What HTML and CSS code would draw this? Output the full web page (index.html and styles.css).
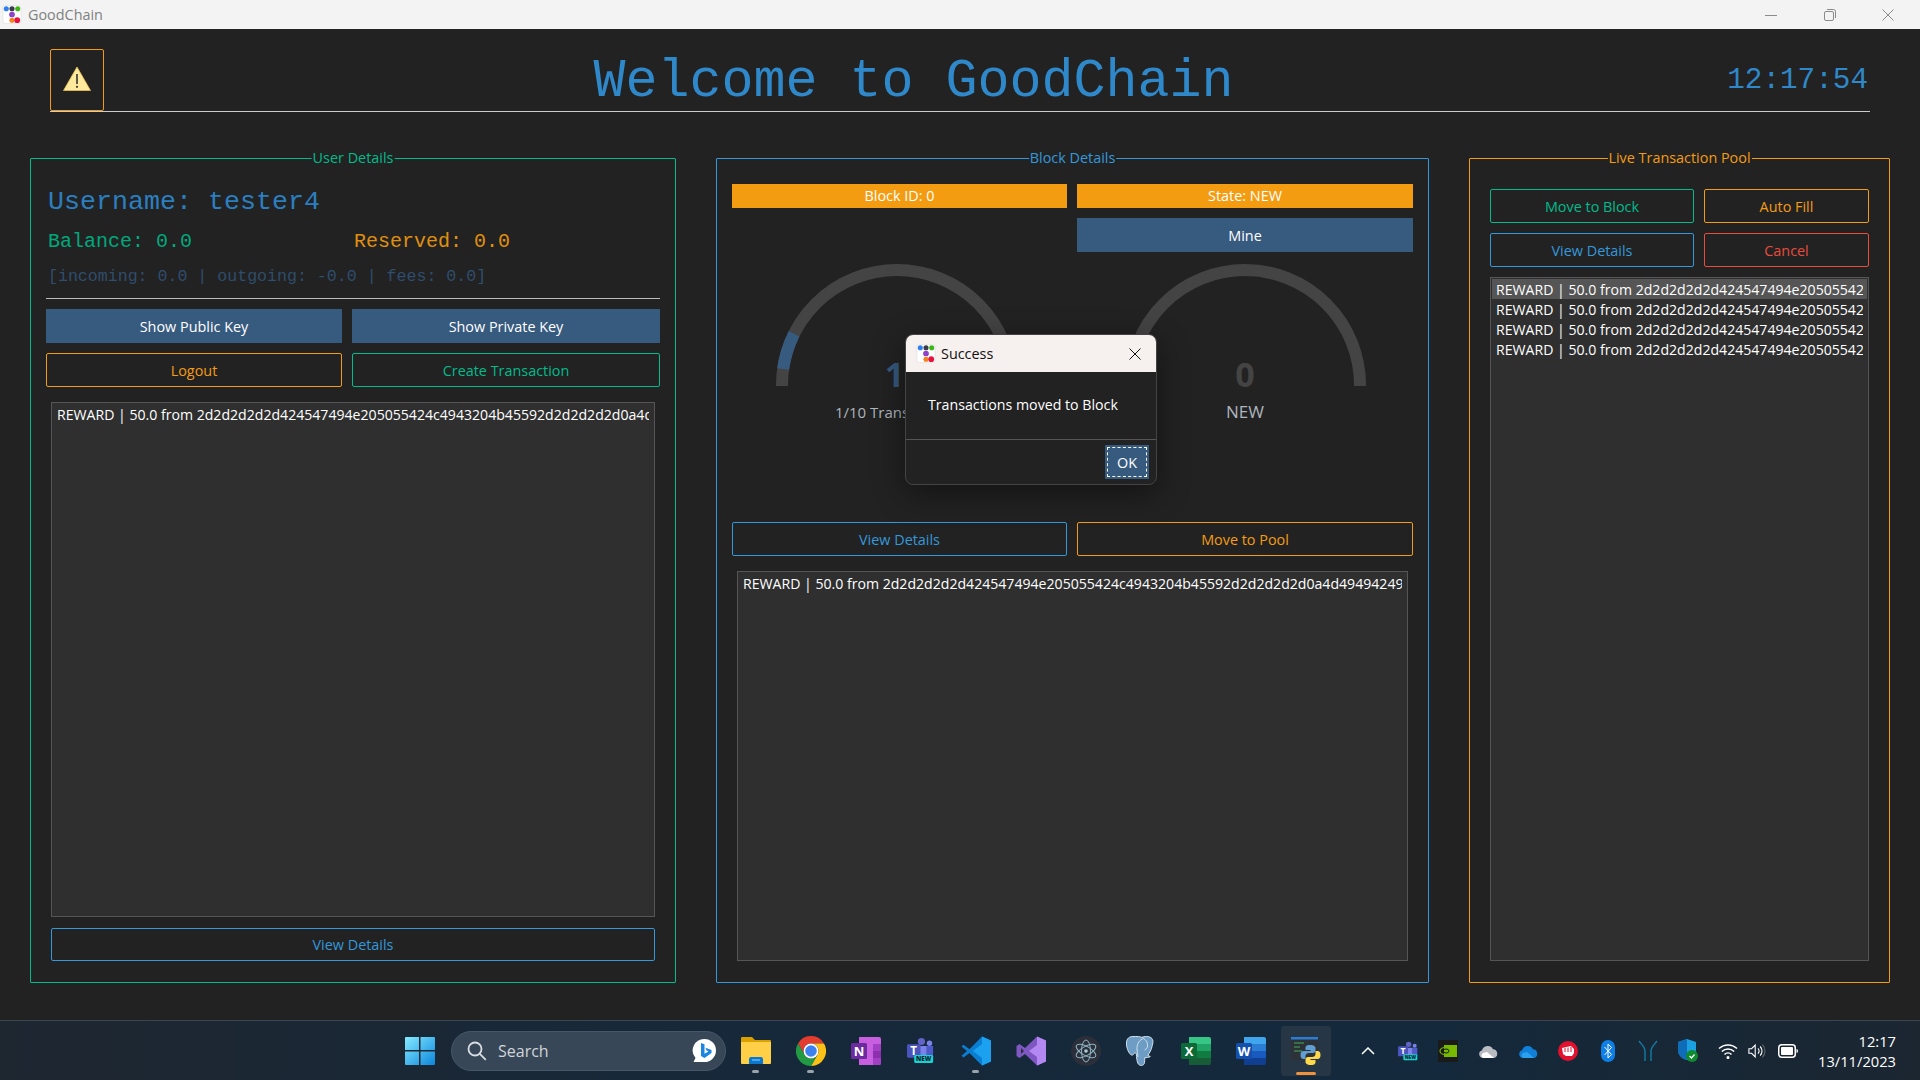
FILE: index.html
```html
<!DOCTYPE html>
<html lang="en">
<head>
    <meta charset="UTF-8">
    <meta name="viewport" content="width=device-width, initial-scale=1.0">
    <title>GoodChain</title>
    <link rel="stylesheet" href="styles.css">
</head>
<body>
    <svg class="defs" width="0" height="0">
        <symbol id="logo" viewBox="0 0 20 20">
            <rect x="0.5" y="0.5" width="19" height="19" rx="2.5" fill="#fff" stroke="#ddd" stroke-width="0.6"/>
            <circle cx="4" cy="4" r="2.7" fill="#2f80ed"/>
            <circle cx="10" cy="4" r="2.7" fill="#3a3a4a"/>
            <circle cx="16" cy="4" r="2.7" fill="#3fb618"/>
            <circle cx="10" cy="10" r="3" fill="#8e44c8"/>
            <circle cx="10" cy="16" r="2.7" fill="#f58220"/>
            <circle cx="15.5" cy="16" r="3" fill="#e8123c"/>
        </symbol>
    </svg>

    <div class="titlebar">
        <svg class="titlebar-logo" width="20" height="19"><use href="#logo"/></svg>
        <span class="titlebar-name">GoodChain</span>
        <div class="caption-buttons">
            <svg width="12" height="12" viewBox="0 0 12 12"><path d="M0 6.5h12" stroke="#8a8a8a" stroke-width="1"/></svg>
            <svg width="12" height="12" viewBox="0 0 12 12" fill="none" stroke="#8a8a8a"><rect x="0.5" y="2.5" width="9" height="9" rx="1.5"/><path d="M3 0.5h6.5a2 2 0 0 1 2 2V9"/></svg>
            <svg width="12" height="12" viewBox="0 0 12 12"><path d="M0.5 0.5l11 11M11.5 0.5l-11 11" stroke="#8a8a8a" stroke-width="1"/></svg>
        </div>
    </div>

    <div class="app">
        <header class="app-header">
            <div class="warn-box">
                <svg width="28" height="25" viewBox="0 0 28 25">
                    <path d="M14 1L27.5 24.5H0.5z" fill="#ffe99c" stroke="#e8c25a" stroke-width="0.8" stroke-linejoin="round"/>
                    <path d="M14 8v10" stroke="#333" stroke-width="1.6"/>
                    <circle cx="14" cy="20.8" r="1.1" fill="#333"/>
                </svg>
            </div>
            <h1 class="app-title">Welcome to GoodChain</h1>
            <div class="app-clock">12:17:54</div>
        </header>

        <div class="panels">
            <section class="panel panel-user">
                <span class="legend">User Details</span>
                <div class="username">Username: tester4</div>
                <div class="stats">
                    <span class="text-green">Balance: 0.0</span>
                    <span class="text-orange">Reserved: 0.0</span>
                </div>
                <div class="breakdown">[incoming: 0.0 | outgoing: -0.0 | fees: 0.0]</div>
                <hr class="sep">
                <div class="btn-grid btn-grid-user">
                    <button class="btn btn-primary">Show Public Key</button>
                    <button class="btn btn-primary">Show Private Key</button>
                    <button class="btn btn-orange">Logout</button>
                    <button class="btn btn-green">Create Transaction</button>
                </div>
                <ul class="listbox listbox-inset">
                    <li><span>REWARD | 50.0 from 2d2d2d2d2d424547494e205055424c4943204b45592d2d2d2d2d0a4d494942496a414e</span></li>
                </ul>
                <button class="btn btn-blue btn-inset">View Details</button>
            </section>

            <section class="panel panel-block">
                <span class="legend">Block Details</span>
                <div class="btn-grid btn-grid-block">
                    <div class="tag">Block ID: 0</div>
                    <div class="tag">State: NEW</div>
                    <button class="btn btn-primary btn-mine">Mine</button>
                </div>
                <div class="gauges">
                    <div class="gauge gauge-left">
                        <svg width="242" height="122" viewBox="0 0 242 122" fill="none" stroke-width="12">
                            <path d="M6 122V121A115 115 0 0 1 236 121V122" stroke="#444"/>
                            <path d="M7.1 105A115 115 0 0 1 18.1 69.7" stroke="#375a7f"/>
                        </svg>
                        <span class="gauge-value gauge-value-on">1</span>
                        <span class="gauge-label">1/10 Transactions</span>
                    </div>
                    <div class="gauge">
                        <svg width="242" height="122" viewBox="0 0 242 122" fill="none" stroke-width="12">
                            <path d="M6 122V121A115 115 0 0 1 236 121V122" stroke="#444"/>
                        </svg>
                        <span class="gauge-value">0</span>
                        <span class="gauge-label">NEW</span>
                    </div>
                </div>
                <div class="btn-grid btn-grid-block">
                    <button class="btn btn-blue">View Details</button>
                    <button class="btn btn-orange">Move to Pool</button>
                </div>
                <ul class="listbox listbox-inset">
                    <li><span>REWARD | 50.0 from 2d2d2d2d2d424547494e205055424c4943204b45592d2d2d2d2d0a4d494942496a414e42676b71</span></li>
                </ul>
            </section>

            <section class="panel panel-pool">
                <span class="legend">Live Transaction Pool</span>
                <div class="btn-grid btn-grid-pool">
                    <button class="btn btn-green">Move to Block</button>
                    <button class="btn btn-orange">Auto Fill</button>
                    <button class="btn btn-blue">View Details</button>
                    <button class="btn btn-red">Cancel</button>
                </div>
                <ul class="listbox">
                    <li class="selected"><span>REWARD | 50.0 from 2d2d2d2d2d424547494e205055424c4943</span></li>
                    <li><span>REWARD | 50.0 from 2d2d2d2d2d424547494e205055424c4943</span></li>
                    <li><span>REWARD | 50.0 from 2d2d2d2d2d424547494e205055424c4943</span></li>
                    <li><span>REWARD | 50.0 from 2d2d2d2d2d424547494e205055424c4943</span></li>
                </ul>
            </section>
        </div>
    </div>

    <!-- message box on top of the block panel -->
    <div class="dialog">
        <div class="dialog-title">
            <svg width="20" height="19"><use href="#logo"/></svg>
            <span>Success</span>
            <svg class="dialog-close" width="12" height="12" viewBox="0 0 12 12"><path d="M0.5 0.5l11 11M11.5 0.5l-11 11" stroke="#111" stroke-width="1"/></svg>
        </div>
        <div class="dialog-body">Transactions moved to Block</div>
        <div class="dialog-foot">
            <button class="btn btn-primary dialog-ok">OK</button>
        </div>
    </div>

    <footer class="taskbar">
        <svg class="start" width="30" height="30" viewBox="0 0 30 30">
            <defs>
                <linearGradient id="win" x1="0" y1="0" x2="1" y2="1"><stop offset="0" stop-color="#86eaff"/><stop offset="1" stop-color="#0a86dc"/></linearGradient>
            </defs>
            <path d="M1 1h13v13H0V2a1 1 0 0 1 1-1zM15.500 1H29a1 1 0 0 1 1 1v12H15.500zM0 15.500h14V29H1a1 1 0 0 1-1-1zM15.500 15.500H30V28a1 1 0 0 1-1 1H15.500z" fill="url(#win)"/>
        </svg>
        <div class="search">
            <svg width="20" height="20" viewBox="0 0 20 20" fill="none" stroke="#d8dde2" stroke-width="1.8"><circle cx="8" cy="8" r="6.5"/><path d="M12.800 12.800l6 6"/></svg>
            <span>Search</span>
            <svg class="search-bing" width="25" height="25" viewBox="0 0 25 25">
                <path d="M12.500 1a11.500 11.500 0 0 1 0 23H1.500l2-4A11.500 11.500 0 0 1 12.500 1z" fill="#fff"/>
                <path d="M9 5l3.500 1.200v9.500l4-2.300-2-1-1-2.600 6 2.200v3L12.500 20 9 18z" fill="#1b86e0"/>
            </svg>
        </div>
        <div class="apps">
            <div class="app-icon has-dot">
                <svg width="30" height="27" viewBox="0 0 30 27">
                    <path d="M1 0h10l3 3h15a1 1 0 0 1 1 1v4H0V1a1 1 0 0 1 1-1z" fill="#d9a000"/>
                    <path d="M0 5h30v21a1 1 0 0 1-1 1H1a1 1 0 0 1-1-1z" fill="#ffcf48"/>
                    <path d="M8 22a2 2 0 0 1 2-2h10a2 2 0 0 1 2 2v5H8z" fill="#0b78d0"/>
                    <path d="M11 23h8" stroke="#8fd0ff" stroke-width="1"/>
                </svg>
            </div>
            <div class="app-icon has-dot">
                <svg width="30" height="30" viewBox="0 0 30 30">
                    <path d="M2 7.500A15 15 0 0 1 28 7.500H15A7.500 7.500 0 0 0 8.500 18.750z" fill="#e33b2e"/>
                    <path d="M28 7.500A15 15 0 0 1 15 30L21.500 18.750A7.500 7.500 0 0 0 15 7.500z" fill="#fbc116"/>
                    <path d="M2 7.500A15 15 0 0 0 15 30L21.500 18.750A7.500 7.500 0 0 1 8.500 18.750z" fill="#229a44"/>
                    <circle cx="15" cy="15" r="7.500" fill="#fff"/>
                    <circle cx="15" cy="15" r="5.800" fill="#3d81f0"/>
                </svg>
            </div>
            <div class="app-icon">
                <svg width="30" height="30" viewBox="0 0 30 30">
                    <path d="M8 1h20a2 2 0 0 1 2 2v24a2 2 0 0 1-2 2H8z" fill="#c85fe0"/>
                    <path d="M22 8h8v7h-8zM22 22h8v5a2 2 0 0 1-2 2h-6z" fill="#a23fc4"/>
                    <path d="M22 15h8v7h-8z" fill="#8e2fb0"/>
                    <rect x="0" y="7" width="16" height="16" rx="1.500" fill="#6c2a9f"/>
                    <text x="8" y="20" class="icon-t">N</text>
                </svg>
            </div>
            <div class="app-icon">
                <svg width="27" height="27" viewBox="0 0 30 30">
                    <circle cx="16" cy="5" r="4" fill="#6264c8"/>
                    <circle cx="25" cy="7" r="3" fill="#7b83eb"/>
                    <path d="M11 10h11v13a4 4 0 0 1-4 4h-3a4 4 0 0 1-4-4z" fill="#7b83eb"/>
                    <path d="M22 10h7v9a4 4 0 0 1-4 4h-3z" fill="#5059c9"/>
                    <rect x="0" y="8" width="15" height="15" rx="1.500" fill="#4b53bc"/>
                    <text x="7.500" y="20" class="icon-t">T</text>
                    <rect x="8" y="20" width="21" height="9" rx="1.500" fill="#19d3d0"/>
                    <text x="18.500" y="27" class="icon-new">NEW</text>
                </svg>
            </div>
            <div class="app-icon has-dot">
                <svg width="30" height="30" viewBox="0 0 30 30">
                    <path d="M0.500 10.500l2-1.800 6 4.500L21 0.500 30 4.500v21L21 29.500 8.500 17 2.500 21.500l-2-1.800L6 15z" fill="#0a7fd2"/>
                    <path d="M21 0.500L30 4.500v21L21 29.500V22L12 15l9-7z" fill="#1ba1f0"/>
                </svg>
            </div>
            <div class="app-icon">
                <svg width="30" height="30" viewBox="0 0 30 30">
                    <path d="M0.500 10l3-2 5.500 4L21 0.500 30 4.500v21L21 29.500 9 18l-5.500 4-3-2z" fill="#7e57c2"/>
                    <path d="M21 0.500L30 4.500v21L21 29.500V21L13 15l8-6z" fill="#b388f0"/>
                    <path d="M5 12v6l3-3z" fill="#2a2f3a"/>
                </svg>
            </div>
            <div class="app-icon">
                <svg width="30" height="30" viewBox="0 0 30 30" fill="none">
                    <circle cx="15" cy="15" r="15" fill="#2b2f3a"/>
                    <g stroke="#8fb4c2" stroke-width="1">
                        <ellipse cx="15" cy="15" rx="11" ry="4.500" transform="rotate(30 15 15)"/>
                        <ellipse cx="15" cy="15" rx="11" ry="4.500" transform="rotate(90 15 15)"/>
                        <ellipse cx="15" cy="15" rx="11" ry="4.500" transform="rotate(150 15 15)"/>
                    </g>
                    <circle cx="15" cy="15" r="1.800" fill="#a9cfdc"/>
                </svg>
            </div>
            <div class="app-icon">
                <svg width="30" height="30" viewBox="0 0 30 30">
                    <path d="M7 0.500C2 0.500 0 4 0.500 9c.5 4 2.500 9 5 10 1.500.5 2.500-1 3.200-2.500.6.500 1 .8 1.600 1 .2 4 .5 8 2 10.500 1.500 2 5 2 6 -.5.500-1.500.4-4 .5-6 1 .5 4 0 5.500-1l-2.500-1c1.500-2.500 4-6 4.500-10.500C28.500 3 25 .5 20.500.5c-2 0-3.500.4-4.500.8C14 .7 11 .3 7 .5z" fill="#6d9cc4" stroke="#d4e2ee" stroke-width="1"/>
                    <path d="M16.500 3C12 5 11 9 11 13c0 3 1 6 1 8M16 1.500c3 1.500 6 4 5.500 9-.3 2-2 3-3 3.500" fill="none" stroke="#d4e2ee" stroke-width="1"/>
                </svg>
            </div>
            <div class="app-icon">
                <svg width="30" height="30" viewBox="0 0 30 30">
                    <path d="M8 1h20a2 2 0 0 1 2 2v6H8z" fill="#37c685"/>
                    <path d="M8 8h22v7H8z" fill="#21a366"/>
                    <path d="M8 15h22v7H8z" fill="#107c41"/>
                    <path d="M8 22h22v5a2 2 0 0 1-2 2H8z" fill="#185c37"/>
                    <rect x="0" y="7" width="16" height="16" rx="1.500" fill="#0b6a38"/>
                    <text x="8" y="20" class="icon-t">X</text>
                </svg>
            </div>
            <div class="app-icon">
                <svg width="30" height="30" viewBox="0 0 30 30">
                    <path d="M8 1h20a2 2 0 0 1 2 2v6H8z" fill="#41a5ee"/>
                    <path d="M8 8h22v7H8z" fill="#2b7cd3"/>
                    <path d="M8 15h22v7H8z" fill="#185abd"/>
                    <path d="M8 22h22v5a2 2 0 0 1-2 2H8z" fill="#103f91"/>
                    <rect x="0" y="7" width="16" height="16" rx="1.500" fill="#1450ae"/>
                    <text x="8" y="20" class="icon-t">W</text>
                </svg>
            </div>
            <div class="app-icon app-icon-active">
                <svg width="30" height="30" viewBox="0 0 30 30">
                    <rect x="0" y="1" width="27" height="23" fill="#2c3238"/>
                    <rect x="0" y="1" width="27" height="2.500" fill="#2b7cd3"/>
                    <path d="M3 7h10M3 11h6M3 15h8" stroke="#3fae5a" stroke-width="1"/>
                    <path d="M19 9c-4 0-4.500 1.500-4.500 3v2h5v1h-7c-2 0-3 1.500-3 4s1 4 3 4h2v-3c0-2 1.500-3 3.500-3h4c1.500 0 2.500-1 2.500-2.500V12c0-1.500-1.500-3-5.500-3z" fill="#5f9fd2"/>
                    <path d="M20 29c4 0 4.500-1.500 4.500-3v-2h-5v-1h7c2 0 3-1.500 3-4s-1-4-3-4h-2v3c0 2-1.500 3-3.500 3h-4c-1.500 0-2.500 1-2.500 2.500V26c0 1.500 1.500 3 5.500 3z" fill="#ffd94c"/>
                </svg>
            </div>
        </div>
        <div class="tray">
            <div class="tray-icon">
                <svg width="14" height="8" viewBox="0 0 14 8" fill="none" stroke="#fff" stroke-width="1.500"><path d="M1 7l6-6 6 6"/></svg>
            </div>
            <div class="tray-icon">
                <svg width="20" height="20" viewBox="0 0 30 30">
                    <circle cx="16" cy="5" r="4" fill="#6264c8"/>
                    <circle cx="25" cy="7" r="3" fill="#7b83eb"/>
                    <path d="M11 10h11v13a4 4 0 0 1-4 4h-3a4 4 0 0 1-4-4z" fill="#7b83eb"/>
                    <path d="M22 10h7v9a4 4 0 0 1-4 4h-3z" fill="#5059c9"/>
                    <rect x="0" y="8" width="15" height="15" rx="1.500" fill="#4b53bc"/>
                    <text x="7.500" y="20" class="icon-t">T</text>
                    <rect x="8" y="20" width="21" height="9" rx="1.500" fill="#19d3d0"/>
                    <text x="18.500" y="27" class="icon-new">NEW</text>
                </svg>
            </div>
            <div class="tray-icon">
                <svg width="20" height="22" viewBox="0 0 20 22">
                    <rect width="20" height="22" fill="#1a1a1a"/>
                    <rect x="6" y="5" width="13" height="12" fill="#76b900"/>
                    <ellipse cx="7" cy="11" rx="5" ry="3.500" fill="none" stroke="#76b900" stroke-width="1.200"/>
                    <ellipse cx="8" cy="11" rx="3" ry="2" fill="none" stroke="#1a1a1a" stroke-width="1"/>
                </svg>
            </div>
            <div class="tray-icon">
                <svg width="20" height="14" viewBox="0 0 20 14">
                    <path d="M5 14a4 4 0 0 1-1-7.800 6 6 0 0 1 11-1A4.500 4.500 0 0 1 16 14z" fill="#b9bdc2"/>
                    <path d="M5 14a3 3 0 0 1 0-5l4-1 7 6z" fill="#fff"/>
                </svg>
            </div>
            <div class="tray-icon">
                <svg width="20" height="14" viewBox="0 0 20 14">
                    <path d="M5 14a4 4 0 0 1-1-7.800 6 6 0 0 1 11-1A4.500 4.500 0 0 1 16 14z" fill="#0f7fd8"/>
                    <path d="M5 14a3 3 0 0 1 0-5l4-1 7 6z" fill="#2aa0ee"/>
                </svg>
            </div>
            <div class="tray-icon">
                <svg width="20" height="22" viewBox="0 0 20 22">
                    <circle cx="10" cy="11" r="10" fill="#e2112e"/>
                    <path d="M4 8l9-2 3 3v4l-2 3H8L5 14z" fill="#fff"/>
                    <path d="M7 8v4M10 7.500v4.500M13 7v5" stroke="#e2112e" stroke-width="1"/>
                </svg>
            </div>
            <div class="tray-icon">
                <svg width="14" height="22" viewBox="0 0 14 22">
                    <rect width="14" height="22" rx="7" fill="#0f7fe8"/>
                    <path d="M3.500 7l7 7.500L7 18V4l3.500 3.500-7 7.500" fill="none" stroke="#fff" stroke-width="1"/>
                </svg>
            </div>
            <div class="tray-icon">
                <svg width="20" height="22" viewBox="0 0 20 22" fill="none" stroke="#137ca8" stroke-width="1.400">
                    <path d="M1 1c3 4 6 6 6 10v10M19 1c-3 4-6 6-6 10v10"/>
                </svg>
            </div>
            <div class="tray-icon">
                <svg width="20" height="23" viewBox="0 0 20 23">
                    <path d="M9 0l9 3v8c0 5-4 9-9 10C4 20 0 16 0 11V3z" fill="#1ba1e2"/>
                    <path d="M9 0v21C4 20 0 16 0 11V3z" fill="#0f6cb8"/>
                    <circle cx="14" cy="17" r="6" fill="#0f8a2f"/>
                    <path d="M11.500 17l2 2 3-3.500" fill="none" stroke="#fff" stroke-width="1.200"/>
                </svg>
            </div>
            <div class="tray-icon">
                <svg width="20" height="16" viewBox="0 0 20 16" fill="none" stroke="#fff" stroke-width="1.500">
                    <path d="M1 5.500a13 13 0 0 1 18 0M3.800 8.500a9 9 0 0 1 12.400 0M6.500 11.500a5 5 0 0 1 7 0"/>
                    <circle cx="10" cy="14.500" r="0.800" fill="#fff"/>
                </svg>
            </div>
            <div class="tray-icon tray-icon-narrow">
                <svg width="20" height="16" viewBox="0 0 20 16" fill="none" stroke="#fff" stroke-width="1.200">
                    <path d="M1 5.500h3l4-4v13l-4-4H1z"/>
                    <path d="M11 5a4 4 0 0 1 0 6M13.500 3a7 7 0 0 1 0 10"/>
                    <path d="M16 1a10 10 0 0 1 0 14" stroke="#666"/>
                </svg>
            </div>
            <div class="tray-icon tray-icon-wide">
                <svg width="20" height="14" viewBox="0 0 20 14">
                    <rect x="0.750" y="0.750" width="16.500" height="12.500" rx="3" fill="none" stroke="#fff" stroke-width="1.500"/>
                    <rect x="3" y="3" width="12" height="8" rx="1" fill="#fff"/>
                    <path d="M18.500 5a1.500 2 0 0 1 0 4z" fill="#fff"/>
                </svg>
            </div>
        </div>
        <div class="clock">
            <span>12:17</span>
            <span>13/11/2023</span>
        </div>
    </footer>
</body>
</html>
```

FILE: styles.css
```css
* {
    box-sizing: border-box;
}

body {
    position: relative;
    display: flex;
    flex-direction: column;
    width: 1920px;
    height: 1080px;
    margin: 0;
    overflow: hidden;
    background-color: #222;
    color: #fff;
    font-family: "Open Sans", sans-serif;
    font-size: 14.4px;
}

.defs {
    position: absolute;
}

.icon-t {
    fill: #fff;
    font-family: "Open Sans", sans-serif;
    font-size: 13px;
    font-weight: 700;
    text-anchor: middle;
}

.icon-new {
    fill: #123;
    font-family: "Open Sans", sans-serif;
    font-size: 7px;
    font-weight: 800;
    text-anchor: middle;
}

/* window title bar */
.titlebar {
    display: flex;
    align-items: center;
    height: 29px;
    padding-left: 2px;
    background-color: #f3f3f3;
}

.titlebar-name {
    margin-left: 6px;
    color: #808080;
}

.caption-buttons {
    display: flex;
    gap: 46.5px;
    margin-left: auto;
    padding-right: 26px;
}

/* app body */
.app {
    flex: 1;
    padding: 20px 30px 0;
}

.app-header {
    display: flex;
    align-items: center;
    height: 63px;
    margin: 0 20px;
    border-bottom: 1px solid #ccc;
}

.warn-box {
    display: flex;
    align-items: center;
    justify-content: center;
    width: 54px;
    height: 62px;
    padding-bottom: 3px;
    border: 1px solid #f39c12;
    border-radius: 2px;
}

.app-title {
    flex: 1;
    margin: 0;
    padding: 3px 4px 0 0;
    color: #2e88c9;
    font-family: "Liberation Mono", monospace;
    font-size: 53.33px;
    font-weight: 400;
    text-align: center;
}

.app-clock {
    padding-right: 2px;
    color: #2e88c9;
    font-family: "Liberation Mono", monospace;
    font-size: 29.33px;
}

.panels {
    display: grid;
    grid-template-columns: 646px 713px 421px;
    column-gap: 40px;
    margin-top: 46px;
}

.panel {
    position: relative;
    display: flex;
    flex-direction: column;
    height: 825px;
    padding: 0 15px 21px;
    border: 1px solid;
    border-radius: 1px;
}

.panel-user {
    padding-top: 27px;
    border-color: #00bc8c;
}

.panel-block {
    padding-top: 25px;
    border-color: #3498db;
}

.panel-pool {
    padding: 30px 20px 21px;
    border-color: #f39c12;
}

.legend {
    position: absolute;
    top: -11px;
    left: 50%;
    padding: 0 1px;
    transform: translateX(-50%);
    background-color: #222;
    line-height: 20px;
    white-space: nowrap;
}

.panel-user .legend {
    color: #00bc8c;
}

.panel-block .legend {
    color: #3498db;
}

.panel-pool .legend {
    color: #f39c12;
}

.username {
    padding-left: 2px;
    color: #2b7fc0;
    font-family: "Liberation Mono", monospace;
    font-size: 26.67px;
    line-height: 32px;
}

.stats {
    display: grid;
    grid-template-columns: 306px 1fr;
    margin-top: 12px;
    padding-left: 2px;
    font-family: "Liberation Mono", monospace;
    font-size: 20px;
    line-height: 24px;
}

.text-green {
    color: #00a87c;
}

.text-orange {
    color: #e0900f;
}

.breakdown {
    margin-top: 13px;
    padding-left: 2px;
    color: #2f4d6d;
    font-family: "Liberation Mono", monospace;
    font-size: 16.6px;
    line-height: 20px;
}

.sep {
    width: 100%;
    height: 1px;
    margin: 11px 0 0;
    border: 0;
    background-color: #bbb;
}

.btn-grid {
    display: grid;
    gap: 10px;
}

.btn-grid-user {
    grid-template-columns: 296px 308px;
    margin-top: 10px;
}

.btn-grid-block {
    grid-template-columns: 335px 336px;
}

.btn-grid-pool {
    grid-template-columns: 204px 165px;
}

.btn {
    height: 34px;
    padding: 0;
    border: 1px solid;
    border-radius: 2px;
    background-color: #222;
    font: inherit;
}

.btn-primary {
    border-color: #375a7f;
    border-radius: 0;
    background-color: #375a7f;
    color: #fff;
}

.btn-orange {
    border-color: #f39c12;
    color: #f39c12;
}

.btn-green {
    border-color: #00bc8c;
    color: #00bc8c;
}

.btn-blue {
    border-color: #3498db;
    color: #3498db;
}

.btn-red {
    border-color: #e74c3c;
    color: #e74c3c;
}

.btn-inset {
    flex: none;
    height: 33px;
    margin: 11px 5px 0;
}

.btn-mine {
    grid-column: 2;
}

.tag {
    height: 24px;
    background-color: #f39c12;
    line-height: 24px;
    text-align: center;
}

.listbox {
    flex: 1;
    margin: 15px 0 0;
    padding: 1px;
    overflow: hidden;
    border: 1px solid #555;
    background-color: #2f2f2f;
    font-size: 14.1px;
    list-style: none;
}

.listbox-inset {
    margin-left: 5px;
    margin-right: 5px;
}

.panel-pool .listbox {
    margin-top: 10px;
}

.listbox li {
    height: 20px;
    padding: 0 4px;
    line-height: 21px;
}

.listbox li span {
    display: block;
    overflow: hidden;
    white-space: nowrap;
}

.listbox .selected {
    background-color: #555;
}

/* gauges */
.gauges {
    display: grid;
    grid-template-columns: 335px 336px;
    flex: none;
    gap: 10px;
    height: 258px;
    margin-top: 12px;
}

.gauge {
    position: relative;
    display: flex;
    flex-direction: column;
    align-items: center;
}

.gauge-left {
    padding-right: 5px;
}

.gauge-value {
    position: absolute;
    top: 89px;
    color: #444;
    font-size: 34px;
    font-weight: 700;
    line-height: 42px;
}

.gauge-value-on {
    color: #375a7f;
    margin-left: -5px;
}

.gauge-label {
    margin-top: 16px;
    color: #adb5bd;
    font-size: 17px;
    line-height: 20px;
}

.gauge-left .gauge-label {
    font-size: 15px;
}

/* message box */
.dialog {
    position: absolute;
    top: 334px;
    left: 905px;
    display: flex;
    flex-direction: column;
    width: 252px;
    height: 151px;
    overflow: hidden;
    border: 1px solid #444;
    border-radius: 8px;
    background-color: #222;
    box-shadow: 0 8px 32px rgba(0, 0, 0, 0.45);
}

.dialog-title {
    display: flex;
    align-items: center;
    flex: none;
    height: 37px;
    padding: 0 15px 0 10px;
    background-color: #f6f0ee;
    color: #111;
}

.dialog-title span {
    margin-left: 5px;
}

.dialog-close {
    margin-left: auto;
}

.dialog-body {
    flex: 1;
    padding: 23px 0 0 22px;
    font-size: 14.2px;
    line-height: 20px;
}

.dialog-foot {
    display: flex;
    justify-content: flex-end;
    flex: none;
    height: 45px;
    padding: 5px 7px 0 0;
    border-top: 1px solid #555;
}

.dialog-ok {
    width: 44px;
    outline: 1px dashed #fff;
    outline-offset: -3px;
}

/* windows taskbar */
.taskbar {
    display: flex;
    align-items: center;
    flex: none;
    height: 60px;
    padding-left: 405px;
    border-top: 1px solid #3a4653;
    background: linear-gradient(90deg, #1e2630 0%, #15293b 45%, #14293b 75%, #1b2631 100%);
}

.start {
    flex: none;
}

.search {
    display: flex;
    align-items: center;
    flex: none;
    width: 275px;
    height: 40px;
    margin-left: 16px;
    padding: 0 8px 0 15px;
    border: 1px solid #47576a;
    border-radius: 20px;
    background-color: #384757;
    color: #cfd5da;
    font-size: 16px;
}

.search span {
    margin-left: 11px;
}

.search-bing {
    margin-left: auto;
}

.apps {
    display: flex;
    margin-left: 2px;
}

.app-icon {
    position: relative;
    display: flex;
    align-items: center;
    justify-content: center;
    width: 55px;
    height: 50px;
}

.has-dot::after {
    content: "";
    position: absolute;
    bottom: 3px;
    left: 24px;
    width: 7px;
    height: 3px;
    border-radius: 2px;
    background-color: #9aa3ab;
}

.app-icon-active {
    border-radius: 5px;
    background-color: #263645;
    background-clip: content-box;
    padding: 0 2.5px;
}

.app-icon-active::after {
    content: "";
    position: absolute;
    bottom: 1px;
    left: 17.500px;
    width: 20px;
    height: 3px;
    border-radius: 2px;
    background-color: #f0923c;
}

.tray {
    display: flex;
    margin-left: 15px;
}

.tray-icon {
    display: flex;
    align-items: center;
    justify-content: center;
    width: 40px;
    height: 30px;
}

.tray-icon-narrow {
    width: 18px;
}

.tray-icon-wide {
    width: 44px;
}

.clock {
    display: flex;
    flex-direction: column;
    align-items: flex-end;
    margin-left: auto;
    padding-right: 24px;
    font-size: 14.7px;
    line-height: 20px;
}
```
